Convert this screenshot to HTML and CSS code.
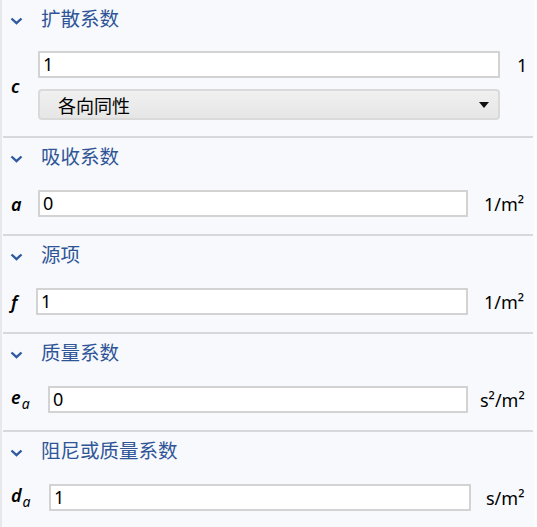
FILE: index.html
```html
<!DOCTYPE html>
<html lang="zh">
<head>
<meta charset="utf-8">
<link rel="stylesheet" href="styles.css">
</head>
<body>
<div class="panel">
  <section class="sec sec-first">
    <div class="head">
      <svg class="chev" width="13" height="8" viewBox="0 0 13 8"><path d="M1.5 1.5 L6.5 6.2 L11.5 1.5" fill="none" stroke="#2f5aa0" stroke-width="2.4"/></svg>
      <span class="title">扩散系数</span>
    </div>
    <div class="grid-c">
      <div class="lbl lbl-c"><i>c</i></div>
      <div class="field">1</div>
      <div class="unit">1</div>
      <div class="select">
        <span>各向同性</span>
        <svg class="tri" width="10" height="6" viewBox="0 0 10 6"><path d="M0 0 H10 L5 6 Z" fill="#111"/></svg>
      </div>
    </div>
  </section>

  <section class="sec">
    <div class="head">
      <svg class="chev" width="13" height="8" viewBox="0 0 13 8"><path d="M1.5 1.5 L6.5 6.2 L11.5 1.5" fill="none" stroke="#2f5aa0" stroke-width="2.4"/></svg>
      <span class="title">吸收系数</span>
    </div>
    <div class="row">
      <div class="lbl lbl-w27"><i>a</i></div>
      <div class="field">0</div>
      <div class="unit unit-a">1/m²</div>
    </div>
  </section>

  <section class="sec">
    <div class="head">
      <svg class="chev" width="13" height="8" viewBox="0 0 13 8"><path d="M1.5 1.5 L6.5 6.2 L11.5 1.5" fill="none" stroke="#2f5aa0" stroke-width="2.4"/></svg>
      <span class="title">源项</span>
    </div>
    <div class="row">
      <div class="lbl lbl-w25"><i>f</i></div>
      <div class="field">1</div>
      <div class="unit unit-a">1/m²</div>
    </div>
  </section>

  <section class="sec">
    <div class="head">
      <svg class="chev" width="13" height="8" viewBox="0 0 13 8"><path d="M1.5 1.5 L6.5 6.2 L11.5 1.5" fill="none" stroke="#2f5aa0" stroke-width="2.4"/></svg>
      <span class="title">质量系数</span>
    </div>
    <div class="row">
      <div class="lbl lbl-w37"><i>e</i><sub>a</sub></div>
      <div class="field">0</div>
      <div class="unit unit-e">s²/m²</div>
    </div>
  </section>

  <section class="sec">
    <div class="head">
      <svg class="chev" width="13" height="8" viewBox="0 0 13 8"><path d="M1.5 1.5 L6.5 6.2 L11.5 1.5" fill="none" stroke="#2f5aa0" stroke-width="2.4"/></svg>
      <span class="title">阻尼或质量系数</span>
    </div>
    <div class="row">
      <div class="lbl lbl-w38"><i>d</i><sub>a</sub></div>
      <div class="field">1</div>
      <div class="unit unit-d">s/m²</div>
    </div>
  </section>
</div>
</body>
</html>
```

FILE: styles.css
```css
html, body {
  margin: 0;
  padding: 0;
  background: #fbfcfe;
}
body {
  font-family: "Noto Sans", "Noto Sans CJK SC", sans-serif;
  color: #000;
  width: 537px;
  height: 527px;
  overflow: hidden;
}
.panel {
  width: 532px;
  background: #f7f9fd;
  border-left: 2px solid #e6e8ec;
  min-height: 527px;
}
.sec {
  margin-left: 1px;
  width: 530px;
  height: 96px;
  border-bottom: 2px solid #d6d8db;
}
.sec-first {
  height: 136px;
}
.head {
  height: 36px;
  display: flex;
  align-items: center;
  padding-left: 7px;
}
.chev {
  display: block;
  margin-top: 5px;
}
.title {
  margin-left: 18px;
  font-family: "Noto Sans CJK SC", sans-serif;
  font-size: 19.5px;
  color: #2f5597;
  line-height: 1;
}
.row {
  margin-top: 16px;
  display: flex;
  align-items: center;
  height: 27px;
  padding-left: 8px;
}
.grid-c {
  margin-top: 15px;
  display: grid;
  grid-template-columns: 27px 462px 33px;
  grid-template-rows: 27px 31px;
  row-gap: 11px;
  align-items: center;
  padding-left: 8px;
}
.lbl {
  font-family: "Noto Sans", sans-serif;
  font-size: 18px;
  font-weight: 600;
  line-height: 1;
  white-space: nowrap;
  flex: none;
}
.lbl i {
  font-style: italic;
}
.lbl sub {
  font-size: 14px;
  font-style: italic;
  font-weight: 400;
  vertical-align: -5px;
  margin-left: 1px;
}
.lbl-c {
  grid-row: 1 / 3;
}
.lbl-w25 { width: 25px; }
.lbl-w27 { width: 27px; }
.lbl-w37 { width: 37px; }
.lbl-w38 { width: 38px; }
.field {
  flex: 1;
  height: 27px;
  box-sizing: border-box;
  border: 2px solid #d3d3d3;
  background: #fff;
  font-size: 18px;
  line-height: 23px;
  padding-left: 3px;
  font-family: "Noto Sans", sans-serif;
}
.unit {
  font-size: 18px;
  line-height: 1;
  font-family: "Noto Sans", sans-serif;
  padding-left: 17px;
  box-sizing: border-box;
  white-space: nowrap;
  flex: none;
}
.unit-a { width: 65px; padding-left: 16px; }
.unit-e { width: 65px; padding-left: 12px; }
.unit-d { width: 62px; padding-left: 15px; }
.select {
  grid-column: 2;
  height: 31px;
  box-sizing: border-box;
  border: 2px solid #dadada;
  border-radius: 4px;
  background: linear-gradient(#f0f0f0, #e6e6e6);
  display: flex;
  align-items: center;
  justify-content: space-between;
  padding: 0 9px 0 18px;
  font-family: "Noto Sans CJK SC", sans-serif;
  font-size: 18px;
}
.tri {
  display: block;
}
```
